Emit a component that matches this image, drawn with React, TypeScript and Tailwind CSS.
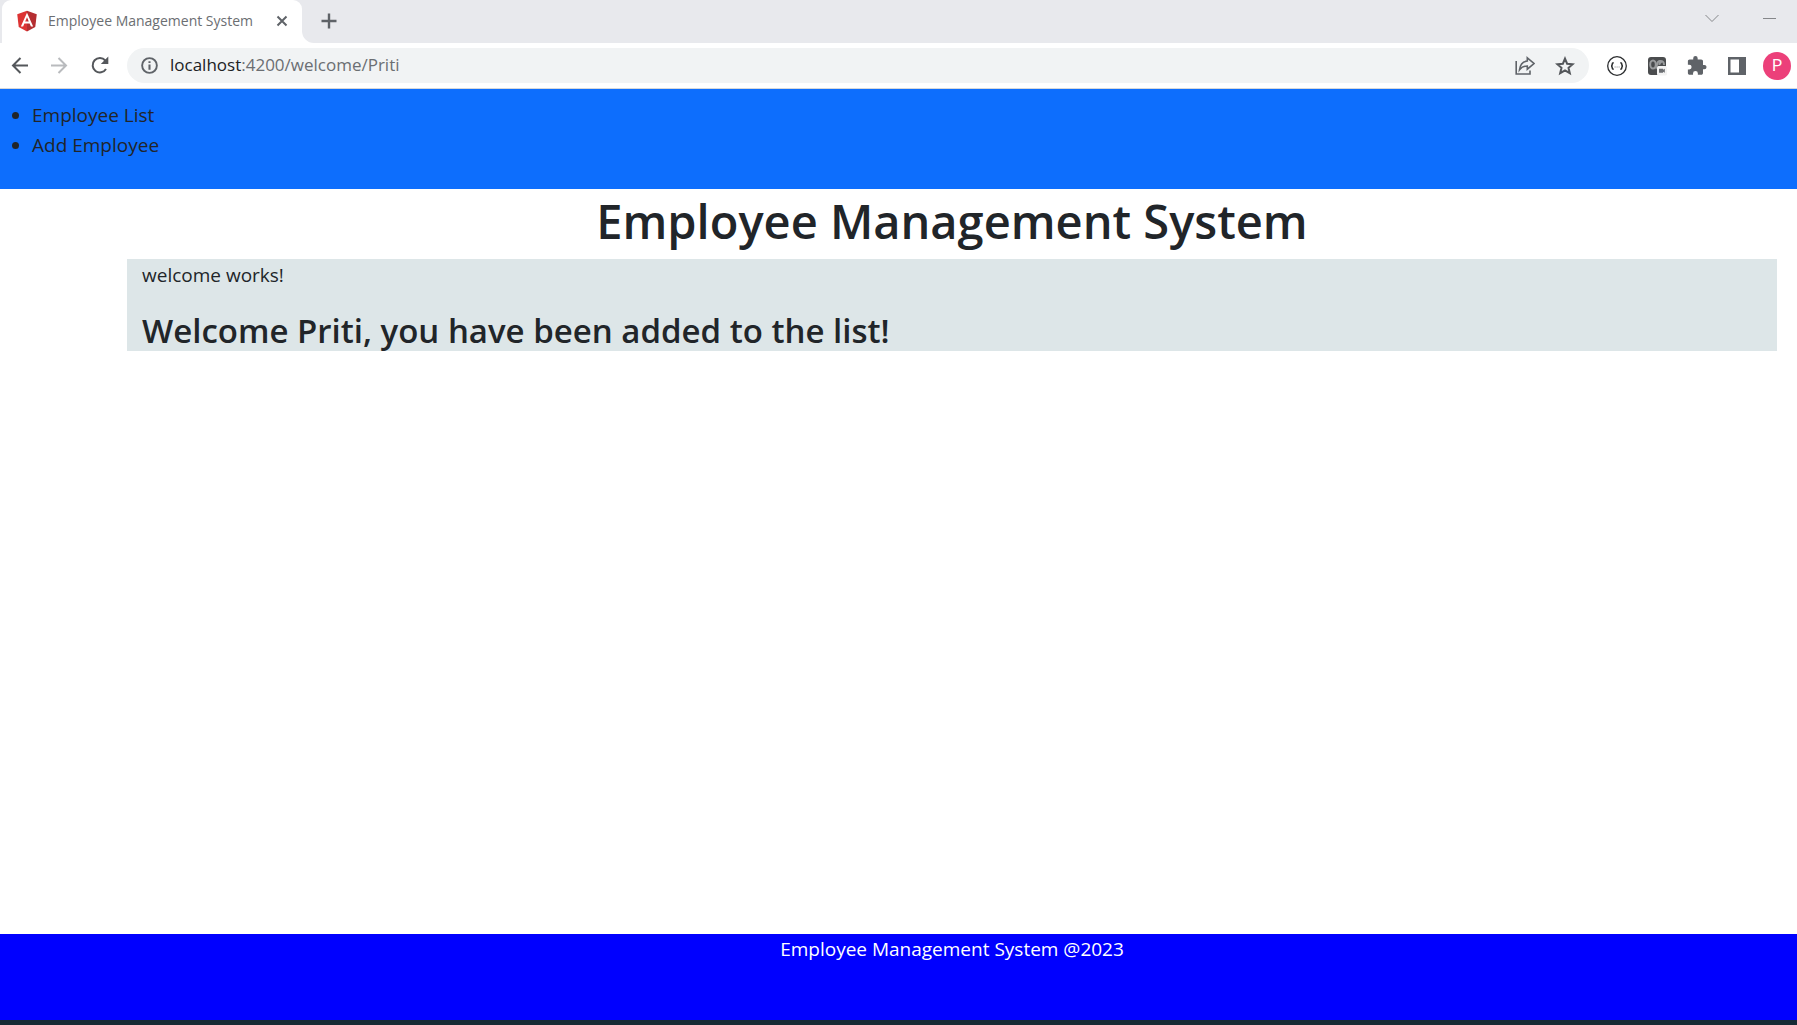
import React from "react";

function AngularLogo() {
  return (
    <svg viewBox="0 0 250 250" className="h-[22px] w-[22px] shrink-0" aria-hidden="true">
      <path fill="#dd3333" d="M125 8 14 47l17 146 94 50z" />
      <path fill="#b52e31" d="M125 8l111 39-17 146-94 50z" />
      <path
        fill="#ffffff"
        d="M125 30 55 188h26l14-35h60l14 35h26L125 30zm20 102h-41l21-50z"
      />
    </svg>
  );
}

function TabStrip() {
  return (
    <div className="flex h-[43px] bg-[#e8e9ed] pl-0.5">
      <div className="relative flex w-[300px] items-center rounded-t-[9px] bg-white pr-2.5 pb-0.5 pl-3.5">
        <AngularLogo />
        <span className="ml-2.5 flex-1 font-['Open_Sans',sans-serif] text-sm whitespace-nowrap text-[#6b6e72]">
          Employee Management System
        </span>
        <button type="button" aria-label="Close tab" className="flex h-5 w-5 items-center justify-center">
          <svg viewBox="0 0 12 12" className="h-3 w-3" stroke="#5f6368" strokeWidth="2" aria-hidden="true">
            <path d="M1.500 1.500l9 9M10.500 1.500l-9 9" />
          </svg>
        </button>
        <svg viewBox="0 0 12 12" className="absolute -right-3 bottom-0 h-3 w-3" fill="#ffffff" aria-hidden="true">
          <path d="M0 0v12h12A12 12 0 0 1 0 0z" />
        </svg>
      </div>
      <button type="button" aria-label="New tab" className="ml-[15px] flex w-6 items-center justify-center pb-px">
        <svg viewBox="0 0 16 16" className="h-4 w-4" stroke="#5f6368" strokeWidth="2.400" aria-hidden="true">
          <path d="M8 .5v15M.5 8h15" />
        </svg>
      </button>
      <div className="ml-auto flex items-start gap-11 pt-3 pr-5">
        <button type="button" aria-label="Search tabs">
          <svg viewBox="0 0 14 14" className="h-3.5 w-3.5" stroke="#85878a" fill="none" aria-hidden="true">
            <path d="M.5 3 7 9.500 13.500 3" />
          </svg>
        </button>
        <button type="button" aria-label="Minimize">
          <svg viewBox="0 0 14 14" className="h-3.5 w-3.5" stroke="#85878a" fill="none" aria-hidden="true">
            <path d="M0 6.500h13" />
          </svg>
        </button>
      </div>
    </div>
  );
}

function Toolbar() {
  return (
    <div className="flex h-[46px] items-center border-b border-[#d5d7da] bg-white pr-1.5">
      <div className="flex w-[127px] shrink-0 items-center gap-5 pl-2.5">
        <button type="button" aria-label="Back">
          <svg viewBox="0 0 20 20" className="h-5 w-5" stroke="#54575b" strokeWidth="2" fill="none" aria-hidden="true">
            <path d="M18 9.500H3M10.500 2 3 9.500l7.500 7.500" />
          </svg>
        </button>
        <button type="button" aria-label="Forward">
          <svg viewBox="0 0 20 20" className="h-5 w-5" stroke="#b9bbbe" strokeWidth="2" fill="none" aria-hidden="true">
            <path d="M1 9.500h15M8.500 2 16 9.500 8.500 17" />
          </svg>
        </button>
        <button type="button" aria-label="Reload">
          <svg viewBox="0 0 20 20" className="h-5 w-5" aria-hidden="true">
            <path d="M16 13A7.200 7.200 0 1 1 15.300 4.500" stroke="#54575b" strokeWidth="2" fill="none" />
            <path d="M18.300.5V8h-7.500z" fill="#54575b" />
          </svg>
        </button>
      </div>
      <div className="flex h-[35px] flex-1 items-center rounded-full bg-[#f1f3f4] px-3.5">
        <svg viewBox="0 0 18 18" className="h-[17px] w-[17px] shrink-0" aria-hidden="true">
          <circle cx="9" cy="9" r="7.800" fill="none" stroke="#5f6368" strokeWidth="2" />
          <path d="M9 4.400v2M9 8v5.500" stroke="#5f6368" strokeWidth="2.200" />
        </svg>
        <a
          href="#welcome"
          className="ml-3 flex-1 pb-px font-['Open_Sans',sans-serif] text-[17px] whitespace-nowrap text-[#6b6e72]"
        >
          <span className="text-[#202124]">localhost</span>:4200/welcome/Priti
        </a>
        <div className="flex items-center gap-5">
          <button type="button" aria-label="Share">
            <svg viewBox="0 0 20 20" className="h-5 w-5" stroke="#5f6368" strokeWidth="1.600" fill="none" aria-hidden="true">
              <path d="M1.200 5v13H15v-3.500" />
              <path d="M12.300 1.800 19 7.500l-6.700 5.700V10C9 10 6.500 11 4.500 13.800 5 9.300 7.500 5.600 12.300 5z" />
            </svg>
          </button>
          <button type="button" aria-label="Bookmark">
            <svg viewBox="0 0 20 20" className="h-5 w-5" stroke="#54575b" strokeWidth="2" fill="none" aria-hidden="true">
              <path d="M10 2.600l2.100 5.100 5.600.5-4.200 3.600 1.300 5.400L10 14.300l-4.800 2.900 1.300-5.400-4.200-3.600 5.600-.5z" />
            </svg>
          </button>
        </div>
      </div>
      <div className="flex items-center gap-5 pl-[18px]">
        <button type="button" aria-label="JSON viewer">
          <svg viewBox="0 0 20 20" className="h-5 w-5" stroke="#2c2e30" fill="none" aria-hidden="true">
            <circle cx="10" cy="10" r="9.300" strokeWidth="1.300" />
            <path
              d="M6.700 6.800c-1.500 0-1.500.5-1.500 1.500S5 10 4 10c1 0 1.200.6 1.200 1.700s0 1.500 1.500 1.500M13.300 6.800c1.500 0 1.500.5 1.500 1.500s.2 1.700 1.200 1.700c-1 0-1.200.6-1.200 1.700s0 1.500-1.500 1.500"
              strokeWidth="1.600"
            />
            <path d="M7.600 11h1M9.600 11h1M11.600 11h1" stroke="#85878a" />
          </svg>
        </button>
        <button type="button" aria-label="Recorder extension">
          <svg viewBox="0 0 20 20" className="h-5 w-5" aria-hidden="true">
            <rect x="1" y="1" width="18" height="18" rx="3" fill="#4a4c4e" />
            <g fill="none" stroke="#999b9d" strokeWidth="2">
              <ellipse cx="6" cy="8.500" rx="2.800" ry="4" />
              <path d="M8.500 12.500c2-1 .500-7 4-7.500s4.500 1.500 4.500 4" />
              <path d="M12.500 9c-.5-2 1-3 2-2" />
            </g>
            <rect x="10" y="10" width="10" height="9.500" rx="1.500" fill="#f3f3f3" />
            <path d="M12 12.800h4v1l1.800-1v4l-1.800-1v1h-4z" fill="#6b6e72" />
          </svg>
        </button>
        <button type="button" aria-label="Extensions">
          <svg viewBox="1 1 22.500 22.500" className="h-5 w-5" fill="#5f6368" aria-hidden="true">
            <path d="M20.500 11H19V7c0-1.100-.9-2-2-2h-4V3.500a2.500 2.500 0 0 0-5 0V5H4c-1.100 0-2 .9-2 2v3.800h1.500a2.700 2.700 0 0 1 0 5.400H2V20c0 1.100.9 2 2 2h3.800v-1.500a2.700 2.700 0 0 1 5.400 0V22H17c1.100 0 2-.9 2-2v-4h1.500a2.500 2.500 0 0 0 0-5z" />
          </svg>
        </button>
        <button type="button" aria-label="Side panel">
          <svg viewBox="0 0 20 20" className="h-5 w-5" aria-hidden="true">
            <path fill="#5f6368" fillRule="evenodd" d="M1 1h18v18H1zM3.500 3.500v13H12v-13z" />
          </svg>
        </button>
        <button
          type="button"
          className="-ml-1 flex h-7 w-7 items-center justify-center rounded-full bg-[#ec407a] font-[Roboto,sans-serif] text-base text-white"
        >
          P
        </button>
      </div>
    </div>
  );
}

export default function App() {
  return (
    <div className="flex min-h-screen flex-col bg-white font-['Open_Sans',sans-serif] text-[#212529]">
      <TabStrip />
      <Toolbar />
      <nav className="h-[100px] bg-[#0d6efd] pt-[11px]">
        <ul className="list-disc pl-8 text-[19px] leading-[30px]">
          <li>
            <a href="#employees">Employee List</a>
          </li>
          <li>
            <a href="#add">Add Employee</a>
          </li>
        </ul>
      </nav>
      <main className="mr-5 ml-[127px] flex-1">
        <h1 className="pt-0.5 pb-2 text-center text-[47px] leading-[60px] font-semibold">Employee Management System</h1>
        <section className="bg-[#dde6e8] pl-[15px]">
          <p className="mb-5 text-[19px] leading-8">welcome works!</p>
          <h2 className="text-[33px] leading-10 font-semibold">Welcome Priti, you have been added to the list!</h2>
        </section>
      </main>
      <footer className="h-[91px] border-b-[5px] border-[#152a35] bg-[#0000ff] pr-5 pl-[127px] text-center text-[19px] leading-[30px] text-white">
        Employee Management System @2023
      </footer>
    </div>
  );
}
